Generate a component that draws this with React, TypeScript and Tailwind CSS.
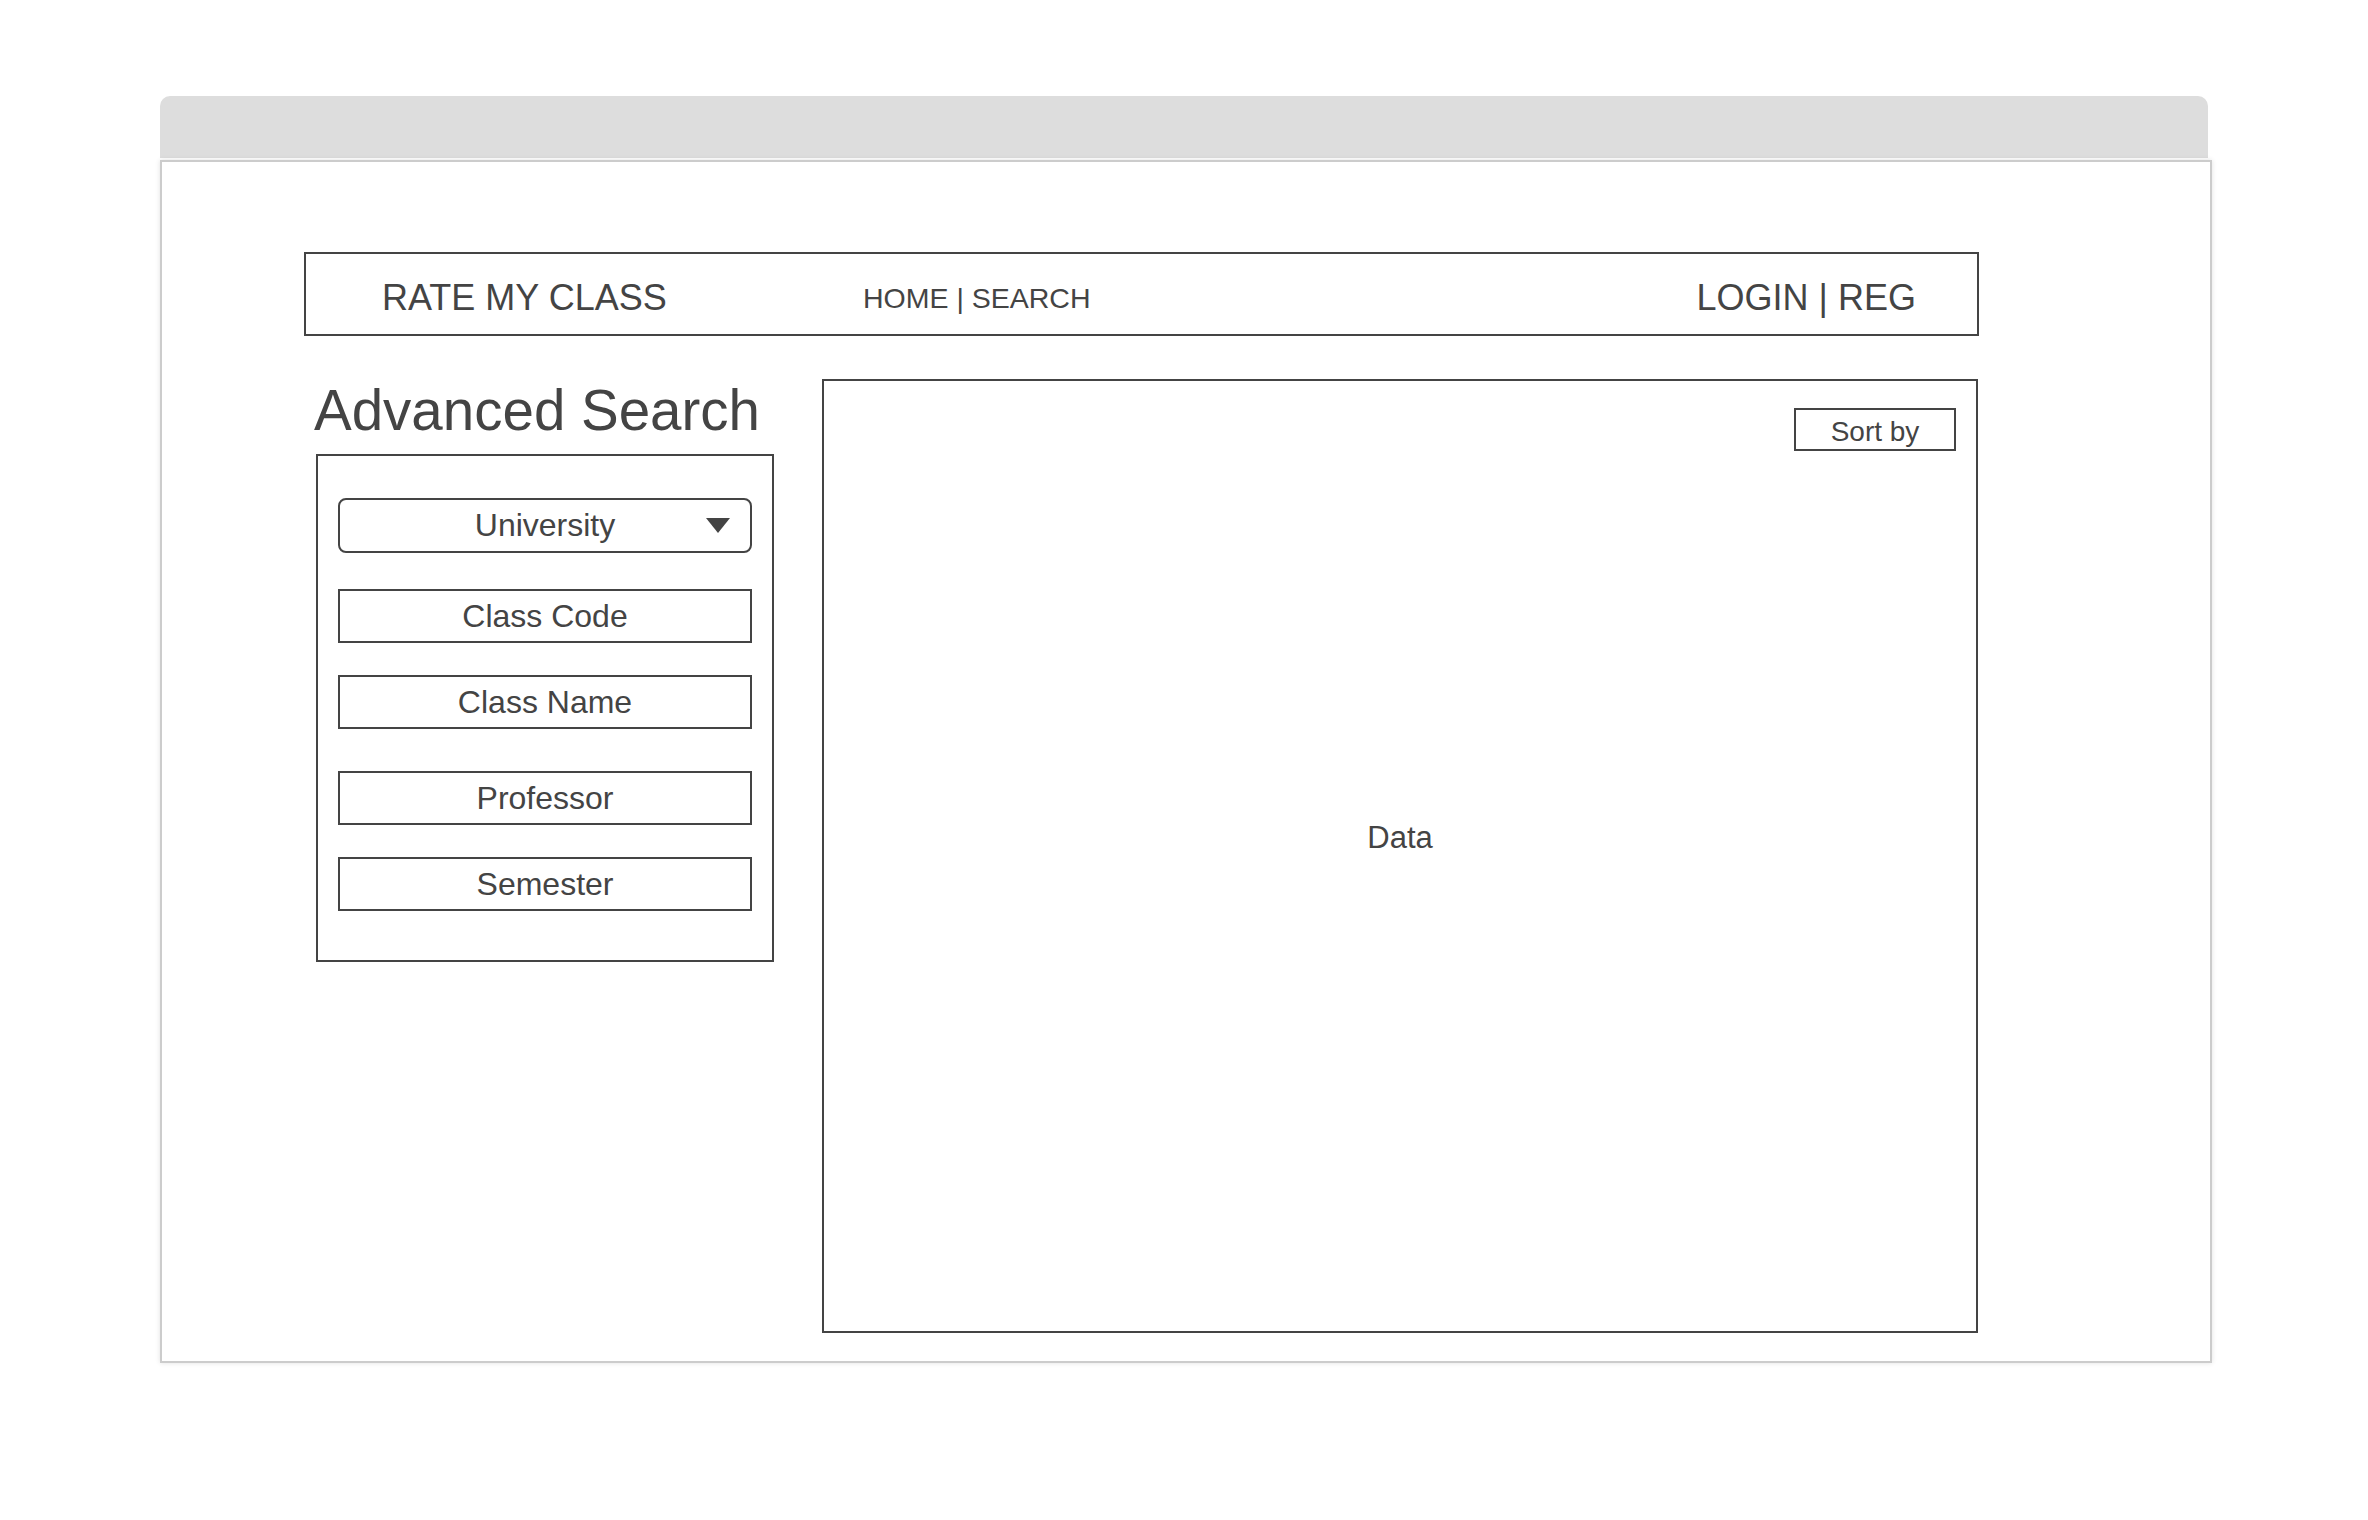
import React from "react";

const fields = [
  { label: "Class Code", gap: "mt-[36px]" },
  { label: "Class Name", gap: "mt-[32px]" },
  { label: "Professor", gap: "mt-[42px]" },
  { label: "Semester", gap: "mt-[32px]" },
];

const App: React.FC = () => {
  return (
    <div
      className="w-[2368px] h-[1520px] bg-white pt-[96px] pl-[160px] text-[#444]"
      style={{ fontFamily: '"Liberation Sans", Arial, sans-serif' }}
    >
      <div className="w-[2052px] flex flex-col">
        {/* browser chrome */}
        <div className="h-[62px] w-[2048px] bg-[#dddddd] rounded-t-[10px]"></div>
        <div className="mt-[2px] h-[1203px] border-2 border-[#cccccc] bg-white shadow-[0_0_5px_rgba(0,0,0,0.12)] pt-[90px] pl-[142px]">
          {/* top nav */}
          <div className="w-[1675px] h-[84px] border-2 border-[#444] flex items-center pt-[8px] pl-[76px] pr-[61px]">
            <div className="w-[481px] text-[36px] whitespace-nowrap">RATE MY CLASS</div>
            <div className="text-[28.5px] whitespace-nowrap">HOME | SEARCH</div>
            <div className="ml-auto text-[36px] whitespace-nowrap">LOGIN | REG</div>
          </div>

          <div className="flex mt-[43px]">
            {/* advanced search */}
            <div className="ml-[12px] w-[458px] flex flex-col">
              <h1 className="mt-[4px] -ml-[2px] text-[56.5px] leading-none whitespace-nowrap">Advanced Search</h1>
              <div className="mt-[14px] h-[508px] border-2 border-[#444] pt-[42px] px-[20px]">
                <div className="relative h-[55px] w-[414px] border-2 border-[#444] rounded-[8px] flex items-center justify-center text-[32px]">
                  University
                  <svg className="absolute right-[20px] top-[18px]" width="24" height="15" viewBox="0 0 24 15">
                    <path d="M0 0 L24 0 L12 15 Z" fill="#444" />
                  </svg>
                </div>
                {fields.map((f) => (
                  <div
                    key={f.label}
                    className={`${f.gap} h-[54px] w-[414px] border-2 border-[#444] flex items-center justify-center text-[32px]`}
                  >
                    {f.label}
                  </div>
                ))}
              </div>
            </div>

            {/* results */}
            <div className="ml-[48px] w-[1156px] h-[954px] border-2 border-[#444] flex flex-col">
              <div className="flex justify-end pt-[27px] pr-[20px]">
                <div className="w-[162px] h-[43px] border-2 border-[#444] flex items-center justify-center pt-[5px] text-[28px]">
                  Sort by
                </div>
              </div>
              <div className="mt-[371px] text-center text-[31px] leading-none">Data</div>
            </div>
          </div>
        </div>
      </div>
    </div>
  );
};

export default App;
